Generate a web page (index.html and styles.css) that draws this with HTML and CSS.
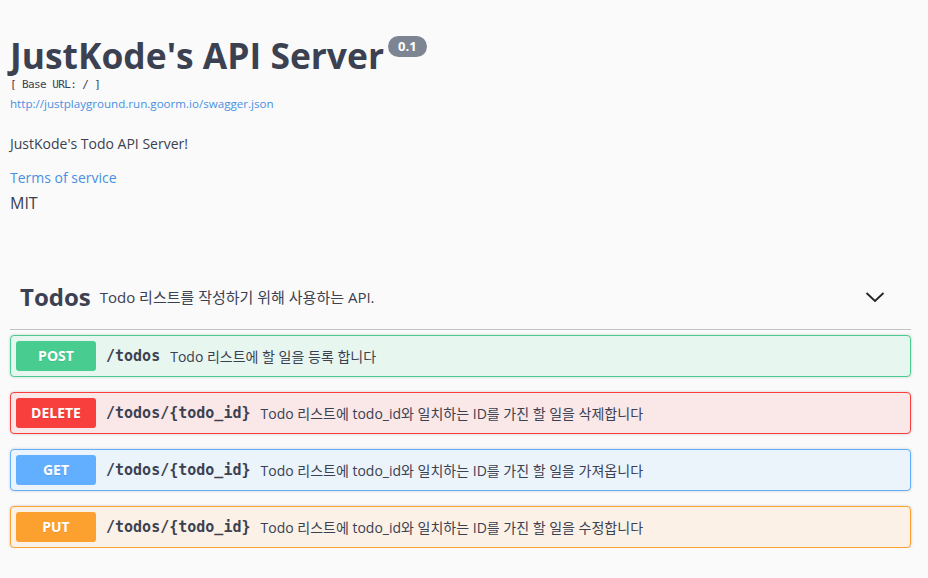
FILE: index.html
```html
<!DOCTYPE html>
<html lang="ko">
<head>
<meta charset="utf-8">
<title>JustKode's API Server</title>
<link rel="stylesheet" href="styles.css">
</head>
<body>
<div class="wrapper">
  <section class="info">
    <h2 class="title">JustKode's API Server<span class="version">0.1</span></h2>
    <div class="base-url">[ Base URL: / ]</div>
    <a class="spec-link" href="#">http://justplayground.run.goorm.io/swagger.json</a>
    <p class="desc">JustKode's Todo API Server!</p>
    <a class="tos" href="#">Terms of service</a>
    <div class="license">MIT</div>
  </section>

  <section class="tag">
    <h3 class="tag-head">
      <span class="tag-name">Todos</span>
      <span class="tag-desc">Todo 리스트를 작성하기 위해 사용하는 API.</span>
      <svg class="chevron" width="20" height="20" viewBox="0 0 20 20"><path d="M1.5 6 L10 14 L18.5 6" fill="none" stroke="#222" stroke-width="1.8"/></svg>
    </h3>
    <div class="ops">
      <div class="op post">
        <span class="method">POST</span>
        <span class="path">/todos</span>
        <span class="summary">Todo 리스트에 할 일을 등록 합니다</span>
      </div>
      <div class="op delete">
        <span class="method">DELETE</span>
        <span class="path">/todos/{todo_id}</span>
        <span class="summary">Todo 리스트에 todo_id와 일치하는 ID를 가진 할 일을 삭제합니다</span>
      </div>
      <div class="op get">
        <span class="method">GET</span>
        <span class="path">/todos/{todo_id}</span>
        <span class="summary">Todo 리스트에 todo_id와 일치하는 ID를 가진 할 일을 가져옵니다</span>
      </div>
      <div class="op put">
        <span class="method">PUT</span>
        <span class="path">/todos/{todo_id}</span>
        <span class="summary">Todo 리스트에 todo_id와 일치하는 ID를 가진 할 일을 수정합니다</span>
      </div>
    </div>
  </section>
</div>
</body>
</html>
```

FILE: styles.css
```css
html, body {
  margin: 0;
  padding: 0;
  background: #fafafa;
}
body {
  font-family: "Open Sans", "Noto Sans CJK KR", sans-serif;
  color: #3b4151;
}
.wrapper {
  padding: 0 17px 0 10px;
}
.info {
  padding-top: 34px;
}
.title {
  margin: 0;
  font-size: 35.4px;
  line-height: 42px;
  font-weight: 700;
  color: #3b4151;
  display: flex;
  align-items: flex-start;
}
.version {
  margin-left: 4px;
  margin-top: 2px;
  background: #7d8492;
  color: #fff;
  font-size: 13px;
  font-weight: 700;
  line-height: 21px;
  padding: 0 10px;
  border-radius: 11px;
}
.base-url {
  font-family: "DejaVu Sans Mono", monospace;
  font-size: 11px;
  letter-spacing: -0.6px;
  line-height: 14px;
  margin-top: 2px;
}
.spec-link {
  display: block;
  margin-top: 4px;
  font-size: 11.6px;
  line-height: 16px;
  color: #4990e2;
  text-decoration: none;
}
.desc {
  margin: 22px 0 0;
  font-size: 14px;
  line-height: 20px;
}
.tos {
  display: block;
  margin-top: 14px;
  font-size: 14px;
  line-height: 20px;
  color: #4990e2;
  text-decoration: none;
}
.license {
  margin-top: 4px;
  font-size: 16px;
  line-height: 22px;
}
.tag {
  margin-top: 58px;
}
.tag-head {
  margin: 0;
  display: flex;
  align-items: center;
  padding: 10px 26px 17px 10px;
  border-bottom: 1px solid rgba(59, 65, 81, .3);
  font-weight: 400;
}
.tag-name {
  font-size: 24px;
  font-weight: 700;
  line-height: 30px;
}
.tag-desc {
  margin-left: 9px;
  font-size: 15px;
  line-height: 20px;
  flex: 1;
}
.chevron {
  display: block;
}
.ops {
  display: flex;
  flex-direction: column;
  gap: 15px;
  margin-top: 5px;
}
.op {
  display: flex;
  align-items: center;
  height: 40px;
  padding: 0 5px;
  border: 1px solid;
  border-radius: 4px;
  box-shadow: 0 0 3px rgba(0, 0, 0, .19);
}
.method {
  width: 80px;
  height: 30px;
  line-height: 30px;
  text-align: center;
  border-radius: 3px;
  color: #fff;
  font-size: 14px;
  font-weight: 700;
  text-shadow: 0 1px 0 rgba(0, 0, 0, .1);
}
.path {
  margin-left: 10px;
  font-family: "DejaVu Sans Mono", monospace;
  font-size: 15px;
  font-weight: 700;
  color: #3b4151;
}
.summary {
  margin-left: 10px;
  font-size: 14px;
  color: #3b4151;
}
.post { background: #e8f6f0; border-color: #49cc90; }
.post .method { background: #49cc90; }
.delete { background: #fae7e7; border-color: #f93e3e; }
.delete .method { background: #f93e3e; }
.get { background: #ebf3fb; border-color: #61affe; }
.get .method { background: #61affe; }
.put { background: #fbf1e6; border-color: #fca130; }
.put .method { background: #fca130; }
```
